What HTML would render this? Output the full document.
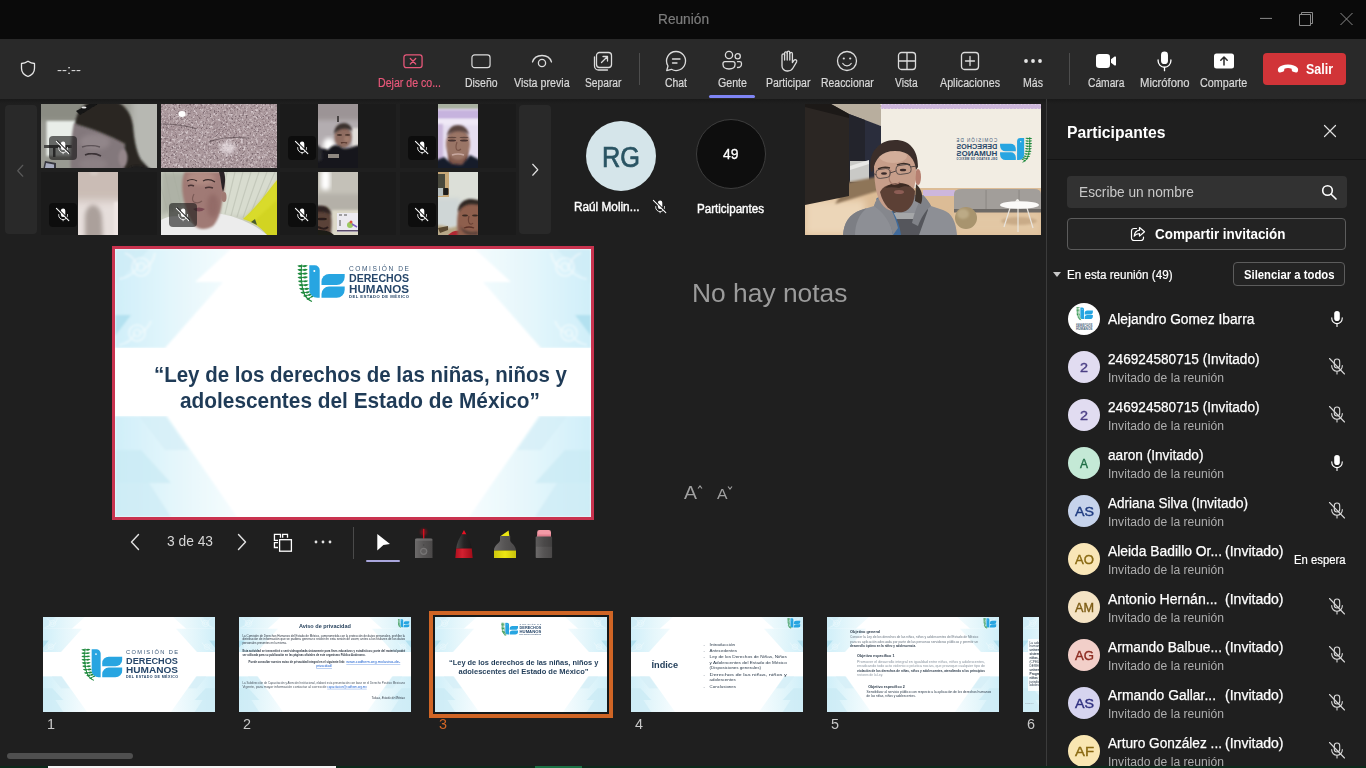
<!DOCTYPE html>
<html lang="es"><head><meta charset="utf-8"><title>Reunión</title><style>
*{box-sizing:border-box;margin:0;padding:0}
html,body{width:1366px;height:768px;overflow:hidden;background:#1f1f1f;font-family:"Liberation Sans",sans-serif;}
.a{position:absolute}
.t{position:absolute;white-space:nowrap;transform-origin:0 50%;}
svg{position:absolute;overflow:visible}
svg.clip{overflow:hidden}
</style></head><body>
<svg width="0" height="0" style="position:absolute"><defs>
<filter id="b1" x="-20%" y="-20%" width="140%" height="140%"><feGaussianBlur stdDeviation="1"/></filter>
<filter id="b2" x="-20%" y="-20%" width="140%" height="140%"><feGaussianBlur stdDeviation="2"/></filter>
<filter id="b3" x="-30%" y="-30%" width="160%" height="160%"><feGaussianBlur stdDeviation="3.500"/></filter>
<filter id="b05" x="-10%" y="-10%" width="120%" height="120%"><feGaussianBlur stdDeviation="0.500"/></filter>
<filter id="rock" x="0" y="0" width="100%" height="100%"><feTurbulence type="fractalNoise" baseFrequency="0.550" numOctaves="2" seed="7" result="n"/><feColorMatrix in="n" type="matrix" values="0 0 0 0 0.200  0 0 0 0 0.140  0 0 0 0 0.160  4 0 0 0 -2.120"/><feGaussianBlur stdDeviation="0.400"/></filter>
<filter id="rockw" x="0" y="0" width="100%" height="100%"><feTurbulence type="fractalNoise" baseFrequency="0.400" numOctaves="2" seed="21" result="n"/><feColorMatrix in="n" type="matrix" values="0 0 0 0 0.940  0 0 0 0 0.880  0 0 0 0 0.900  0 3.500 0 0 -1.750"/><feGaussianBlur stdDeviation="0.500"/></filter>
<filter id="rock2" x="0" y="0" width="100%" height="100%"><feTurbulence type="fractalNoise" baseFrequency="0.060" numOctaves="2" seed="3" result="n"/><feColorMatrix in="n" type="matrix" values="0 0 0 0 0.350  0 0 0 0 0.260  0 0 0 0 0.280  2.500 0 0 0 -1.050"/></filter>
<symbol id="micoff" viewBox="0 0 28 24"><g fill="none" stroke="#e4e4e4" stroke-linecap="round"><rect x="11.900" y="5.600" width="4.400" height="8.300" rx="2.200" fill="#fff" stroke="none"/><path d="M9.700 11.600v.6a4.400 4.400 0 0 0 8.800 0v-.6" stroke-width="1"/><path d="M14.100 16.600v1.200" stroke-width="1"/><path d="M8.200 5.200l12.200 12" stroke="#161616" stroke-width="1.600"/><path d="M7.400 5.300l12.400 12.300" stroke="#fff" stroke-width="1.100"/></g></symbol>

<linearGradient id="lg1" gradientUnits="userSpaceOnUse" x1="0" x2="118" y1="0" y2="0"><stop offset="0" stop-color="#d0eff9"/><stop offset=".5" stop-color="#e4f6fb"/><stop offset="1" stop-color="#f5fcfe"/></linearGradient>
<linearGradient id="lg2" x1="0" x2="1" y1="0" y2="0"><stop offset="0" stop-color="#bfe5f2"/><stop offset="1" stop-color="#dff2f8"/></linearGradient>
<g id="sbgq">
 <path d="M0 0H116L80 33H0z" fill="url(#lg1)"/><path d="M0 33H108L50 99H0z" fill="url(#lg1)"/>
 <path d="M0 0H34L0 36z" fill="#cdebf5" opacity=".6"/>
 <path d="M0 66H16L0 87z" fill="#b3e1f0"/>
 <g fill="none" stroke="#fff" stroke-width="1.600" opacity=".55"><circle cx="26" cy="18" r="9"/><circle cx="26" cy="18" r="4"/><path d="M4 30q14-2 20-14M40 4q-2 12-12 16M10 4q10 4 12 14"/><circle cx="22" cy="84" r="8"/><circle cx="22" cy="84" r="3.500"/><path d="M4 96q12-2 16-12M36 72q-4 10-12 12"/><circle cx="22" cy="250" r="9"/><path d="M4 262q12-2 18-12M40 238q-4 10-14 12M6 236q10 4 14 14"/><circle cx="20" cy="190" r="7"/></g>
 <path d="M0 167H52L122 268H0z" fill="url(#lg1)"/>
 <path d="M24 167H50L74 201H50z" fill="#d4eef7" opacity=".7"/>
 <path d="M0 201H26L56 234H0z" fill="#c9e9f4" opacity=".7"/>
 <path d="M0 234H34L56 268H0z" fill="#cdebf5" opacity=".7"/>
</g>
<symbol id="sbg" viewBox="0 0 476 268" preserveAspectRatio="none">
 <rect width="476" height="268" fill="#fff"/>
 <g filter="url(#b1)"><use href="#sbgq"/><use href="#sbgq" transform="translate(476,0) scale(-1,1)"/></g>
 <rect x="0" y="99" width="476" height="68" fill="#fff" opacity=".9"/>
</symbol>
<symbol id="bird" viewBox="0 0 48 38">
 <g fill="#1f8a3e"><path d="M5.200 0.500c-1 10-0.500 22 3 30c1.500 3 4 5 7 6.500l-.5.900c-3.500-1.500-6-3.800-7.600-7c-3.400-8-3.900-20-2.900-30.400z"/>
 <path d="M0.300 1.800q3 2.800 5.200 0.600q2.200 1.800 5.300-0.800q-2.600-1.300-5.300 0q-2.400-1.300-5.200.2zM0.300 5.600q3 2.800 5.200 0.600q2.200 1.800 5.300-0.800q-2.600-1.300-5.300 0q-2.400-1.300-5.200.2zM0.400 9.400q3 2.800 5.200 0.600q2.200 1.800 5.300-0.800q-2.600-1.300-5.300 0q-2.400-1.300-5.200.2zM0.500 13.200q3 2.800 5.200 0.600q2.200 1.800 5.300-0.800q-2.600-1.300-5.300 0q-2.400-1.300-5.200.2zM0.800 17q3 2.800 5.200 0.600q2.200 1.800 5.300-0.800q-2.600-1.300-5.300 0q-2.400-1.300-5.200.2zM1.300 20.800q3 2.800 5.200 0.600q2.200 1.800 5.300-0.800q-2.600-1.300-5.300 0q-2.400-1.300-5.200.2zM2 24.600q3 2.800 5.200 0.600q2.200 1.800 5.300-0.800q-2.600-1.300-5.300 0q-2.400-1.300-5.200.2zM3.400 28.400q3 2.600 5 0.400q2.400 1.600 5.200-1.200q-2.700-1-5.200.4q-2.600-1-5 .4zM6 32q3.200 2 4.800-.4q2.600 1.200 4.800-2q-2.800-.6-4.900 1.200q-2.700-.6-4.700 1.200zM9.500 35.600q3.300.8 4-1.800q2.700.4 3.800-3q-2.700.3-4.200 2.400q-2.600.3-3.600 2.400z"/></g>
 <path d="M12.300 1.300h5.400a5 5 0 0 1 5 5v27.500h-2.400a8 8 0 0 1-8-8z" fill="#27a5e1"/>
 <circle cx="17.300" cy="6.900" r="1" fill="#fff"/>
 <path d="M32 10h15.700v3a8 8 0 0 1-8 8H24.500v-3.500a7.500 7.500 0 0 1 7.500-7.500z" fill="#27a5e1"/>
 <path d="M32 22.600h15.700v3.200a8 8 0 0 1-8 8H24.500v-3.700a7.500 7.500 0 0 1 7.500-7.500z" fill="#27a5e1"/>
</symbol>
<symbol id="logo" viewBox="0 0 112 38">
 <use href="#bird" x="0" y="0" width="48" height="38"/>
 <g font-family="Liberation Sans, sans-serif" fill="#27476a">
 <text x="52" y="7" font-size="6.600" textLength="60" lengthAdjust="spacing" fill="#3a5878">COMISIÓN DE</text>
 <text x="52" y="18" font-size="11" font-weight="700" textLength="60" lengthAdjust="spacingAndGlyphs">DERECHOS</text>
 <text x="52" y="28.600" font-size="11" font-weight="700" textLength="60" lengthAdjust="spacingAndGlyphs">HUMANOS</text>
 <text x="52" y="34.300" font-size="4.200" font-weight="700" textLength="60" lengthAdjust="spacing">DEL ESTADO DE MÉXICO</text>
 </g>
</symbol>

</defs></svg>
<div class="a" style="left:0px;top:0px;width:1366px;height:39px;background:#0a0a0a"></div>
<div class="t" style="left:657.5px;top:10.0px;font-size:14px;line-height:18px;color:#7c7c7c;font-weight:400;transform:scaleX(0.9778);-webkit-text-stroke:.2px #7c7c7c;">Reunión</div>
<svg style="left:1255px;top:8px" width="100" height="24" viewBox="0 0 100 24" fill="none" stroke="#8a8a8a" stroke-width="1"><path d="M5 10.400h12"/><path d="M44.500 6.500h11v11h-11zM46.500 6.500v-2h11v11h-2"/><path d="M85.500 5l12 12M97.500 5l-12 12"/></svg>
<div class="a" style="left:0px;top:39px;width:1366px;height:60px;background:#292929"></div>
<div class="a" style="left:0px;top:99px;width:1366px;height:5px;background:linear-gradient(#191919,#1f1f1f)"></div>
<svg style="left:18px;top:59px" width="20" height="20" viewBox="0 0 20 20" fill="none" stroke="#e6e6e6" stroke-width="1.300" stroke-linejoin="round"><path d="M10 2.200c2.200 1.500 4.300 2.200 6.500 2.300v4.700c0 4-2.600 6.800-6.500 8.300c-3.900-1.500-6.500-4.300-6.500-8.300v-4.700c2.200-.1 4.300-.8 6.500-2.300z"/></svg>
<div class="t" style="left:57.0px;top:61.0px;font-size:13px;line-height:17px;color:#e0e0e0;font-weight:400;transform:scaleX(1.1463);">--:--</div>
<svg style="left:403px;top:53.500px" width="20" height="14.500" viewBox="0 0 22 16" fill="none" stroke="#e8587a" stroke-width="1.400" stroke-linecap="round"><rect x="1" y="1" width="20" height="14" rx="2.500"/><path d="M8 5l6 6M14 5l-6 6"/></svg>
<div class="t" style="left:378.0px;top:75.0px;font-size:12px;line-height:16px;color:#e8587a;font-weight:400;transform:scaleX(0.8827);-webkit-text-stroke:.2px #e8587a;">Dejar de co...</div>
<svg style="left:471px;top:53.500px" width="20" height="14.500" viewBox="0 0 22 16" fill="none" stroke="#dcdcdc" stroke-width="1.300"><rect x="1" y="1" width="20" height="14" rx="3"/></svg>
<div class="t" style="left:465.0px;top:75.0px;font-size:12px;line-height:16px;color:#d9d9d9;font-weight:400;transform:scaleX(0.8699);-webkit-text-stroke:.2px #d9d9d9;">Diseño</div>
<svg style="left:531px;top:52px" width="22" height="18" viewBox="0 0 22 18" fill="none" stroke="#dcdcdc" stroke-width="1.300" stroke-linecap="round"><path d="M1.500 10c1.200-4 4.800-6.500 9.500-6.500s8.300 2.500 9.500 6.500"/><circle cx="11" cy="11" r="3.600"/></svg>
<div class="t" style="left:514.0px;top:75.0px;font-size:12px;line-height:16px;color:#d9d9d9;font-weight:400;transform:scaleX(0.8898);-webkit-text-stroke:.2px #d9d9d9;">Vista previa</div>
<svg style="left:593px;top:51px" width="20" height="20" viewBox="0 0 20 20" fill="none" stroke="#dcdcdc" stroke-width="1.300" stroke-linecap="round" stroke-linejoin="round"><rect x="3.500" y="1.500" width="15" height="15" rx="3"/><path d="M1.500 6v9a4 4 0 0 0 4 4h9"/><path d="M8.500 11.500l6-6M10 5.500h4.500v4.500"/></svg>
<div class="t" style="left:585.0px;top:75.0px;font-size:12px;line-height:16px;color:#d9d9d9;font-weight:400;transform:scaleX(0.8524);-webkit-text-stroke:.2px #d9d9d9;">Separar</div>
<div class="a" style="left:639px;top:53px;width:1px;height:32px;background:#4d4d4d"></div>
<svg style="left:665px;top:50px" width="22" height="22" viewBox="0 0 22 22" fill="none" stroke="#dcdcdc" stroke-width="1.300" stroke-linecap="round" stroke-linejoin="round"><path d="M11 1.500a9.500 9.500 0 1 1-4.600 17.800l-4.700 1.300 1.300-4.600A9.500 9.500 0 0 1 11 1.500z"/><path d="M7.500 9h7.500M7.500 13h4.500"/></svg>
<div class="t" style="left:665.0px;top:75.0px;font-size:12px;line-height:16px;color:#d9d9d9;font-weight:400;transform:scaleX(0.8675);-webkit-text-stroke:.2px #d9d9d9;">Chat</div>
<svg style="left:721px;top:50px" width="22" height="22" viewBox="0 0 22 22" fill="none" stroke="#dcdcdc" stroke-width="1.300" stroke-linecap="round" stroke-linejoin="round"><circle cx="8" cy="5" r="3.600"/><circle cx="16.700" cy="6.300" r="2.600"/><path d="M2 13.500a1.800 1.800 0 0 1 1.800-1.800h8.400a1.800 1.800 0 0 1 1.800 1.800v1c0 2.800-2.400 4.500-6 4.500s-6-1.700-6-4.500z"/><path d="M16.500 11.700h2.200a1.800 1.800 0 0 1 1.800 1.800v.5c0 2.200-1.600 3.500-4 3.500"/></svg>
<div class="t" style="left:717.7px;top:75.0px;font-size:12px;line-height:16px;color:#d9d9d9;font-weight:400;transform:scaleX(0.8868);-webkit-text-stroke:.2px #d9d9d9;">Gente</div>
<div class="a" style="left:709px;top:95px;width:46px;height:2.5px;background:#7f85f5;border-radius:1.500px"></div>
<svg style="left:778px;top:49px" width="20" height="24" viewBox="0 0 20 24" fill="none" stroke="#dcdcdc" stroke-width="1.300" stroke-linecap="round" stroke-linejoin="round"><path d="M4 13V6.200a1.300 1.300 0 0 1 2.600 0V4.200a1.300 1.300 0 0 1 2.600 0V3.500a1.300 1.300 0 0 1 2.600 0v1.200a1.300 1.300 0 0 1 2.600 0v8.800l1.700-2.300a1.500 1.500 0 0 1 2.500 1.600l-3.600 6.200a6 6 0 0 1-5.200 3h-.8A5 5 0 0 1 4 17z"/><path d="M6.600 6v5M9.200 4.200V11M11.800 4.500V11"/></svg>
<div class="t" style="left:766.0px;top:75.0px;font-size:12px;line-height:16px;color:#d9d9d9;font-weight:400;transform:scaleX(0.8760);-webkit-text-stroke:.2px #d9d9d9;">Participar</div>
<svg style="left:836px;top:50px" width="22" height="22" viewBox="0 0 22 22" fill="none" stroke="#dcdcdc" stroke-width="1.300" stroke-linecap="round"><circle cx="11" cy="11" r="9.500"/><path d="M6.800 13.500c1 1.500 2.500 2.300 4.200 2.300s3.200-.8 4.200-2.300"/><circle cx="7.800" cy="8.500" r="1.100" fill="#dcdcdc" stroke="none"/><circle cx="14.200" cy="8.500" r="1.100" fill="#dcdcdc" stroke="none"/></svg>
<div class="t" style="left:821.0px;top:75.0px;font-size:12px;line-height:16px;color:#d9d9d9;font-weight:400;transform:scaleX(0.8698);-webkit-text-stroke:.2px #d9d9d9;">Reaccionar</div>
<svg style="left:897px;top:51px" width="20" height="20" viewBox="0 0 20 20" fill="none" stroke="#dcdcdc" stroke-width="1.300"><rect x="1.500" y="1.500" width="17" height="17" rx="3"/><path d="M10 1.500v17M1.500 10h17"/></svg>
<div class="t" style="left:895.4px;top:75.0px;font-size:12px;line-height:16px;color:#d9d9d9;font-weight:400;transform:scaleX(0.8538);-webkit-text-stroke:.2px #d9d9d9;">Vista</div>
<svg style="left:960px;top:51px" width="20" height="20" viewBox="0 0 20 20" fill="none" stroke="#dcdcdc" stroke-width="1.300" stroke-linecap="round"><rect x="1.500" y="1.500" width="17" height="17" rx="3"/><path d="M10 5.500v9M5.500 10h9"/></svg>
<div class="t" style="left:940.0px;top:75.0px;font-size:12px;line-height:16px;color:#d9d9d9;font-weight:400;transform:scaleX(0.8905);-webkit-text-stroke:.2px #d9d9d9;">Aplicaciones</div>
<svg style="left:1023px;top:57px" width="20" height="8" viewBox="0 0 20 8" fill="#e6e6e6"><circle cx="3" cy="4" r="1.900"/><circle cx="10" cy="4" r="1.900"/><circle cx="17" cy="4" r="1.900"/></svg>
<div class="t" style="left:1023.0px;top:75.0px;font-size:12px;line-height:16px;color:#d9d9d9;font-weight:400;transform:scaleX(0.8822);-webkit-text-stroke:.2px #d9d9d9;">Más</div>
<div class="a" style="left:1069px;top:53px;width:1px;height:32px;background:#4d4d4d"></div>
<svg style="left:1095px;top:52px" width="22" height="18" viewBox="0 0 22 18" fill="#ffffff"><rect x="1" y="2" width="14" height="14" rx="3.200"/><path d="M16 7.200l3.600-2.600a.9.900 0 0 1 1.400.7v7.400a.9.900 0 0 1-1.400.7L16 10.800z"/></svg>
<div class="t" style="left:1087.5px;top:75.0px;font-size:12px;line-height:16px;color:#d9d9d9;font-weight:400;transform:scaleX(0.8551);-webkit-text-stroke:.2px #d9d9d9;">Cámara</div>
<svg style="left:1155.500px;top:50px" width="17" height="22.600" viewBox="0 0 18 24" fill="#ffffff"><rect x="5.300" y="1.500" width="7.400" height="13.500" rx="3.700"/><path d="M2.200 10.500v1a6.800 6.800 0 0 0 13.600 0v-1" fill="none" stroke="#fff" stroke-width="1.400" stroke-linecap="round"/><path d="M9 18.500v3.500" stroke="#fff" stroke-width="1.400" stroke-linecap="round"/></svg>
<div class="t" style="left:1139.5px;top:75.0px;font-size:12px;line-height:16px;color:#d9d9d9;font-weight:400;transform:scaleX(0.9395);-webkit-text-stroke:.2px #d9d9d9;">Micrófono</div>
<svg style="left:1213px;top:52px" width="22" height="18" viewBox="0 0 22 18"><rect x="1" y="1.500" width="20" height="15" rx="2.500" fill="#fff"/><path d="M11 13V5.500M7.800 8.300L11 5l3.200 3.300" fill="none" stroke="#292929" stroke-width="1.500" stroke-linecap="round" stroke-linejoin="round"/></svg>
<div class="t" style="left:1199.8px;top:75.0px;font-size:12px;line-height:16px;color:#d9d9d9;font-weight:400;transform:scaleX(0.8958);-webkit-text-stroke:.2px #d9d9d9;">Comparte</div>
<div class="a" style="left:1263px;top:53px;width:83px;height:32px;background:#d13438;border-radius:4px"></div>
<svg style="left:1277px;top:63px" width="22" height="12" viewBox="0 0 22 12" fill="#fff"><path d="M11 1.500c-4.300 0-8 1.300-9.600 3.600c-.7 1-.6 2.300-.2 3.400c.3.800 1.100 1.200 1.900 1l2.800-.7c.7-.2 1.200-.8 1.300-1.500l.2-1.600c1.100-.5 2.300-.7 3.600-.7s2.500.2 3.600.7l.2 1.600c.1.700.6 1.300 1.300 1.500l2.800.7c.8.200 1.600-.2 1.900-1c.4-1.100.5-2.400-.2-3.400C19 2.800 15.300 1.500 11 1.500z"/></svg>
<div class="t" style="left:1305.5px;top:60.0px;font-size:14px;line-height:18px;color:#fff;font-weight:700;transform:scaleX(0.8893);">Salir</div>
<div class="a" style="left:5px;top:105px;width:32px;height:129px;background:#292929;border-radius:4px"></div>
<svg style="left:16px;top:163.500px" width="8.500" height="13.500" viewBox="0 0 10 16" fill="none" stroke="#5a5a5a" stroke-width="1.400" stroke-linecap="round" stroke-linejoin="round"><path d="M8 1.500l-6 6.500 6 6.500"/></svg>
<div class="a" style="left:519px;top:105px;width:32px;height:129px;background:#292929;border-radius:4px"></div>
<svg style="left:530.500px;top:163.300px" width="8.500" height="13.500" viewBox="0 0 10 16" fill="none" stroke="#e0e0e0" stroke-width="1.400" stroke-linecap="round" stroke-linejoin="round"><path d="M2 1.500l6 6.500-6 6.500"/></svg>
<div class="a" style="left:41px;top:104px;width:115.6px;height:64px;background:#1b1b1b;overflow:hidden"><svg style="left:0;top:0" width="116" height="64" viewBox="0 0 116 64"><rect width="116" height="64" fill="#999a92"/><rect x="-10" y="-10" width="52" height="26" fill="#8b8c83" filter="url(#b2)"/><rect x="90" y="-10" width="40" height="90" fill="#b7b8b2" filter="url(#b3)"/><rect x="5.500" y="17" width="31" height="35" fill="#e9eee9" filter="url(#b1)"/><rect x="3" y="41" width="28" height="3" fill="#4a4a46" filter="url(#b05)"/><rect x="12" y="43" width="2.500" height="10" fill="#4a4a46" filter="url(#b05)"/><path d="M2 66l2-9 11 2v7z" fill="#34353e" filter="url(#b05)"/><path d="M4 64l1-5 8 1.500v3.500z" fill="#a8acc0" filter="url(#b05)"/><path d="M33 19C50 23 70 31 85 40L88 72H30C29 50 30 32 33 19z" fill="#83787c" filter="url(#b1)"/><ellipse cx="54" cy="38" rx="15" ry="8" fill="#988c90" opacity=".7" filter="url(#b2)"/><ellipse cx="52" cy="60" rx="14" ry="6" fill="#908488" opacity=".7" filter="url(#b2)"/><path d="M34 20C36 4 46-5 62-5C80-5 90 6 92 22C93 34 95 46 99 54C101 58 106 61 110 68L83 68L84 40C70 32 50 24 34 20z" fill="#2a2523" filter="url(#b1)"/><ellipse cx="82" cy="54" rx="4.500" ry="9" fill="#94868a" filter="url(#b1)"/><path d="M44 51q8-3 16 1" stroke="#3a3236" stroke-width="1.800" fill="none" filter="url(#b05)"/><path d="M41 43q9-3 18 0" stroke="#4a4044" stroke-width="1.400" fill="none" opacity=".7" filter="url(#b05)"/><path d="M35 7l14-7h8l-18 11z" fill="#141414" filter="url(#b05)"/><ellipse cx="43" cy="3.500" rx="2.500" ry="1" fill="#e8e8e8" filter="url(#b05)"/><path d="M86 68c2-8 12-8 26-2v4z" fill="#1e1c1d" filter="url(#b1)"/></svg><div class="a" style="left:8px;top:32px;width:28px;height:24px;border-radius:4px;background:rgba(20,20,20,.62)"></div><svg style="left:8px;top:32px" width="28" height="24"><use href="#micoff"/></svg></div>
<div class="a" style="left:161px;top:104px;width:115.6px;height:64px;background:#1b1b1b;overflow:hidden"><svg style="left:0;top:0" width="116" height="64" viewBox="0 0 116 64"><rect width="116" height="64" fill="#ae9ca0"/><rect width="116" height="64" filter="url(#rock2)" opacity=".55"/><rect width="116" height="64" filter="url(#rockw)" opacity=".55"/><rect width="116" height="64" filter="url(#rock)"/><ellipse cx="21" cy="10" rx="3.500" ry="3" fill="#fff" filter="url(#b05)"/><ellipse cx="67" cy="44" rx="8" ry="6" fill="#efe6ea" opacity=".7" filter="url(#b2)"/><path d="M0 20q20 0 36 5M48 38q14-6 40-4" stroke="#4a3c40" stroke-width="1.200" fill="none" opacity=".55" filter="url(#b05)"/></svg></div>
<div class="a" style="left:280px;top:104px;width:115.6px;height:64px;background:#1b1b1b;overflow:hidden"><svg class="clip" style="left:38px;top:0" width="40" height="64" viewBox="0 0 40 64"><g><rect width="40" height="64" fill="#b3adb0"/><rect x="-8" y="-8" width="56" height="24" fill="#9c9496" filter="url(#b2)"/><ellipse cx="11" cy="41" rx="6" ry="7" fill="#fff" filter="url(#b2)"/><rect x="34" y="24" width="12" height="18" fill="#e0dcd8" filter="url(#b1)"/><ellipse cx="25" cy="33" rx="8.500" ry="11" fill="#8e6c60" filter="url(#b1)"/><path d="M16 30c0-8 6-11 10-11s8 3 8 8c-4-3-12-4-18 3z" fill="#3a302e" filter="url(#b1)"/><g filter="url(#b05)" fill="#4a342c"><ellipse cx="21.500" cy="31" rx="2.600" ry=".9"/><ellipse cx="29.500" cy="31" rx="2.600" ry=".9"/></g><path d="M23 39q3-1.500 6 0" stroke="#5a3a30" stroke-width="1.600" fill="none" filter="url(#b05)"/><ellipse cx="29" cy="35" rx="3" ry="3" fill="#b08a78" opacity=".6" filter="url(#b1)"/><path d="M-6 72V50c4-6 12-6 16-4c4-6 10-6 14-2c6 2 12-2 22-4v32z" fill="#16171d" filter="url(#b1)"/><path d="M-6 40c10 0 11 8 10 16l-10 4z" fill="#2a2a2e" filter="url(#b1)"/><rect x="10" y="50" width="11" height="4" fill="#8e8880" filter="url(#b05)"/><path d="M19 12h2v6h-2z" fill="#4a4444" filter="url(#b05)"/></g></svg><div class="a" style="left:8px;top:32px;width:28px;height:24px;border-radius:4px;background:#0d0d0d"></div><svg style="left:8px;top:32px" width="28" height="24"><use href="#micoff"/></svg></div>
<div class="a" style="left:400px;top:104px;width:115.6px;height:64px;background:#1b1b1b;overflow:hidden"><svg class="clip" style="left:38px;top:0" width="40" height="64" viewBox="0 0 40 64"><g><rect width="40" height="64" fill="#e6def0"/><rect x="-6" y="-6" width="52" height="11" fill="#a8b0a0" filter="url(#b1)"/><rect x="-6" y="6" width="52" height="9" fill="#c6b3de" filter="url(#b1)"/><rect x="-6" y="15" width="52" height="6" fill="#efe8f6" filter="url(#b1)"/><rect x="-6" y="20" width="11" height="40" fill="#cbb8dc" filter="url(#b1)"/><rect x="10" y="46" width="20" height="18" fill="#80594c" filter="url(#b1)"/><ellipse cx="20" cy="40" rx="12" ry="16" fill="#9a7466" filter="url(#b1)"/><path d="M9 32c1-8 6-11 11-11s10 3 11 10c-6-5-16-5-22 1z" fill="#5a4440" filter="url(#b1)"/><g filter="url(#b05)" fill="#4a3430"><ellipse cx="14" cy="36.500" rx="4" ry="1"/><ellipse cx="26" cy="36.500" rx="4" ry="1"/><ellipse cx="14" cy="33.500" rx="4.500" ry=".7" opacity=".7"/><ellipse cx="26" cy="33.500" rx="4.500" ry=".7" opacity=".7"/></g><path d="M19 38q-2 6 0 8q2 1 4-1" stroke="#7a5448" stroke-width="1.200" fill="none" filter="url(#b05)"/><path d="M14 51q6-2 12 0" stroke="#c8a8a0" stroke-width="1.500" fill="none" filter="url(#b05)"/><path d="M-6 72v-14l12-5 8 7 10 1 8-10 14 7v14z" fill="#161a2c" filter="url(#b1)"/></g></svg><div class="a" style="left:8px;top:32px;width:28px;height:24px;border-radius:4px;background:#0d0d0d"></div><svg style="left:8px;top:32px" width="28" height="24"><use href="#micoff"/></svg></div>
<div class="a" style="left:41px;top:172px;width:115.6px;height:63px;background:#1b1b1b;overflow:hidden"><svg class="clip" style="left:37px;top:0" width="40" height="63" viewBox="0 0 40 63"><g><rect width="40" height="63" fill="#d0c4be"/><rect x="-10" y="30" width="60" height="50" fill="#e6dedb" filter="url(#b3)"/><ellipse cx="16" cy="1" rx="4" ry="2.500" fill="#fff" filter="url(#b1)"/><rect x="-10" y="-10" width="60" height="34" fill="#c9bbb3" filter="url(#b2)" opacity=".8"/><path d="M7 70V46c0-8 4-13 8-13s9 5 9 14l1 23z" fill="#aba09b" filter="url(#b2)"/><rect x="36" y="30" width="8" height="40" fill="#efe6e4" filter="url(#b1)"/></g></svg><div class="a" style="left:8px;top:31px;width:28px;height:24px;border-radius:4px;background:#0d0d0d"></div><svg style="left:8px;top:31px" width="28" height="24"><use href="#micoff"/></svg></div>
<div class="a" style="left:161px;top:172px;width:115.6px;height:63px;background:#1b1b1b;overflow:hidden"><svg style="left:0;top:0" width="116" height="63" viewBox="0 0 116 63"><rect width="116" height="63" fill="#c9ccc0"/><path d="M0 0h26v30L0 44z" fill="#aeb2a6" filter="url(#b2)"/><path d="M62 0h54v10L84 44H58z" fill="#d8dccf" filter="url(#b2)"/><g stroke="#a8ad9f" stroke-width="1.200" opacity=".4" filter="url(#b05)"><path d="M66 0L58 40M74 0L64 42M82 0L70 44M90 0L76 45M98 0L82 46M106 0L88 46M114 0L96 40M4 0L12 40M12 0L20 34M-2 8L8 44"/></g><path d="M116 8v55h-10c-6-8-16-14-24-16c10-8 24-26 34-39z" fill="#d2d422"/><path d="M116 8v20L92 50l-10-3c10-8 24-26 34-39z" fill="#e0e236" opacity=".5" filter="url(#b1)"/><path d="M0 63V48c6-4 16-5 22-2l14 8c8 0 14-6 18-13c18 2 38 10 52 22z" fill="#ececec" filter="url(#b05)"/><path d="M22 24c-2-12 0-22 2-24h36c4 6 4 20 2 26c-2 10-4 22-10 28c-6 4-14 4-18 0c-6-8-10-18-12-30z" fill="#a07a74" filter="url(#b1)"/><ellipse cx="40" cy="6" rx="14" ry="7" fill="#ba948a" opacity=".7" filter="url(#b2)"/><ellipse cx="52" cy="34" rx="6" ry="12" fill="#8a625e" opacity=".6" filter="url(#b2)"/><path d="M58 0h5c2 6 1 14-1 20c-2-6-2-14-4-20z" fill="#2a2426" filter="url(#b05)"/><ellipse cx="63" cy="25" rx="2.500" ry="5" fill="#a07a72" filter="url(#b05)"/><path d="M26 9q5-3 10 0M42 9q6-3 12 1" stroke="#3a2a2a" stroke-width="1.200" fill="none" filter="url(#b05)"/><path d="M27 14q3-1.500 6 0M44 16q4-1.500 8 0" stroke="#4a3434" stroke-width="1.400" fill="none" filter="url(#b05)"/><path d="M32 37q6-3 12 0q-6 5-12 0z" fill="#7a4a52" filter="url(#b05)"/><path d="M33 22q-3 6 0 8q4 2 8-1" stroke="#7a5a56" stroke-width="1.200" fill="none" filter="url(#b05)"/><path d="M90 50l4-3 2 6z" fill="#4a5a30" filter="url(#b05)"/></svg><div class="a" style="left:8px;top:31px;width:28px;height:24px;border-radius:4px;background:rgba(20,20,20,.60)"></div><svg style="left:8px;top:31px" width="28" height="24"><use href="#micoff"/></svg></div>
<div class="a" style="left:280px;top:172px;width:115.6px;height:63px;background:#1b1b1b;overflow:hidden"><svg class="clip" style="left:38px;top:0" width="40" height="63" viewBox="0 0 40 63"><g><rect width="40" height="63" fill="#c4c1b8"/><rect x="-8" y="22" width="56" height="18" fill="#b4b0a8" filter="url(#b2)"/><rect x="3" y="-2" width="9" height="20" rx="4" fill="#fff" filter="url(#b2)"/><rect x="14" y="38" width="32" height="32" fill="#dcd8c8" filter="url(#b1)"/><rect x="19" y="41" width="21" height="19" fill="#eceaf0" filter="url(#b05)"/><rect x="19" y="58" width="21" height="1.500" fill="#5a4a6a" filter="url(#b05)"/><circle cx="32" cy="53" r="3" fill="#9ac860" filter="url(#b05)"/><circle cx="33" cy="50" r="1.500" fill="#e05040" filter="url(#b05)"/><path d="M34 52l5 3" stroke="#8060c0" stroke-width="1.500" filter="url(#b05)"/><path d="M21 43h3M26 43h3M22 48v6" stroke="#555" stroke-width="1" filter="url(#b05)"/><path d="M-6 36c12-3 18 0 19 8c1 8 0 14-1 26H-6z" fill="#5a4238" filter="url(#b1)"/><path d="M-6 35c12-3 18 0 19 8c-4-3-8-4-19-3z" fill="#2e2420" filter="url(#b1)"/><g filter="url(#b05)"><ellipse cx="4" cy="47" rx="5" ry="1.300" fill="#2a1e1a"/><path d="M0 55c4 2 8 2 10 0" stroke="#2a1e1a" stroke-width="2" fill="none"/></g><path d="M0 63v-5c6 0 12 1 16 5z" fill="#1c1a18" filter="url(#b05)"/></g></svg><div class="a" style="left:8px;top:31px;width:28px;height:24px;border-radius:4px;background:#0d0d0d"></div><svg style="left:8px;top:31px" width="28" height="24"><use href="#micoff"/></svg></div>
<div class="a" style="left:400px;top:172px;width:115.6px;height:63px;background:#1b1b1b;overflow:hidden"><svg class="clip" style="left:38px;top:0" width="40" height="63" viewBox="0 0 40 63"><g><rect width="40" height="63" fill="#dcdfd8"/><rect x="-8" y="26" width="30" height="30" fill="#cfd6d6" filter="url(#b2)"/><rect x="0" y="0" width="11" height="25" fill="#c8a878" filter="url(#b05)"/><rect x="0" y="2" width="7" height="21" fill="#4a4a3c" filter="url(#b05)"/><rect x="0" y="16" width="5" height="8" fill="#b8c0c0" filter="url(#b05)"/><rect x="5.500" y="16" width="5" height="7" rx="1" fill="#1e1c1c" filter="url(#b05)"/><path d="M-6 70v-16c10-2 14 0 18 2l8-2v16z" fill="#b8a888" filter="url(#b1)"/><path d="M0 56l10-2v4l-8 3z" fill="#5a4a30" filter="url(#b05)"/><path d="M10 63c4-4 8-5 12-4v4z" fill="#b02830" filter="url(#b05)"/><path d="M20 70c-1-10-2-29 2-35c4-6 12-7 24-4v39z" fill="#8e5e4e" filter="url(#b1)"/><path d="M20 40c0-8 6-13 12-13c4 0 6 1 14 2v5c-12-3-20-2-24 4z" fill="#2e2622" filter="url(#b1)"/><g filter="url(#b05)" fill="#3a2a24"><ellipse cx="27" cy="43.500" rx="3" ry="1"/><ellipse cx="37" cy="43.500" rx="3" ry="1"/></g><path d="M31 44q-1.500 6 1 8q2 .5 3-1" stroke="#6a4034" stroke-width="1.200" fill="none" filter="url(#b05)"/><path d="M26 56q5-2 10 0" stroke="#5a3028" stroke-width="1.300" fill="none" filter="url(#b05)"/><path d="M22 54c2 6 6 9 10 9h8v-4c-6 2-14 0-18-5z" fill="#5a4038" filter="url(#b1)"/></g></svg><div class="a" style="left:8px;top:31px;width:28px;height:24px;border-radius:4px;background:#0d0d0d"></div><svg style="left:8px;top:31px" width="28" height="24"><use href="#micoff"/></svg></div>
<div class="a" style="left:586px;top:121px;width:70px;height:70px;background:#d5e5ea;border-radius:50%"></div>
<div class="t" style="left:602.0px;top:137.5px;font-size:29px;line-height:38px;color:#2a5463;font-weight:400;transform:scaleX(0.8736);-webkit-text-stroke:.7px #2a5463;">RG</div>
<div class="t" style="left:573.8px;top:198.5px;font-size:12px;line-height:16px;color:#fff;font-weight:400;transform:scaleX(0.9820);-webkit-text-stroke:.4px #fff;">Raúl Molin...</div>
<svg style="left:646px;top:194.700px" width="28" height="24"><use href="#micoff"/></svg>
<div class="a" style="left:696px;top:119px;width:70px;height:70px;background:#0e0e0e;border:1px solid #3d3d3d;border-radius:50%"></div>
<div class="t" style="left:723.0px;top:144.5px;font-size:14px;line-height:18px;color:#fff;font-weight:400;transform:scaleX(0.9950);-webkit-text-stroke:.3px #fff;">49</div>
<div class="t" style="left:697.0px;top:200.5px;font-size:12px;line-height:16px;color:#fff;font-weight:400;transform:scaleX(0.9658);-webkit-text-stroke:.4px #fff;">Participantes</div>
<div class="a" style="left:112px;top:246px;width:482px;height:274px;background:#c9334f"></div>
<svg style="left:115px;top:249px" width="476" height="268"><use href="#sbg" width="476" height="268"/></svg>
<svg style="left:297px;top:264px" width="112" height="38"><use href="#logo" width="112" height="38"/></svg>
<div class="t" style="left:154.0px;top:360.0px;font-size:22px;line-height:29px;color:#1f3b57;font-weight:700;transform:scaleX(0.9305);">“Ley de los derechos de las niñas, niños y</div>
<div class="t" style="left:180.0px;top:386.0px;font-size:22px;line-height:29px;color:#1f3b57;font-weight:700;transform:scaleX(0.9467);">adolescentes del Estado de México”</div>
<div class="t" style="left:692.0px;top:275.5px;font-size:26px;line-height:34px;color:#9b9b9b;font-weight:400;transform:scaleX(1.0149);">No hay notas</div>
<div class="t" style="left:684.0px;top:480.0px;font-size:19px;line-height:25px;color:#a0a0a0;font-weight:400;transform:scaleX(1.0246);">A</div>
<div class="t" style="left:716.5px;top:483.5px;font-size:15px;line-height:20px;color:#a0a0a0;font-weight:400;transform:scaleX(1.0484);">A</div>
<svg style="left:697px;top:484px" width="40" height="8" viewBox="0 0 40 8" fill="none" stroke="#a0a0a0" stroke-width="1.100"><path d="M1 4.500l2-2.500 2 2.500"/><path d="M31 2.500l2 2.500 2-2.500"/></svg>
<svg style="left:129px;top:533px" width="12" height="18" viewBox="0 0 12 18" fill="none" stroke="#e2e2e2" stroke-width="1.400" stroke-linecap="round" stroke-linejoin="round"><path d="M9.500 1.500L2.500 9l7 7.500"/></svg>
<div class="t" style="left:166.6px;top:532.0px;font-size:14px;line-height:18px;color:#d6d6d6;font-weight:400;transform:scaleX(0.9846);">3 de 43</div>
<svg style="left:236px;top:533px" width="12" height="18" viewBox="0 0 12 18" fill="none" stroke="#e2e2e2" stroke-width="1.400" stroke-linecap="round" stroke-linejoin="round"><path d="M2.500 1.500L9.500 9l-7 7.500"/></svg>
<svg style="left:268px;top:528px" width="30" height="30" viewBox="0 0 30 30" fill="none" stroke="#fff" stroke-width="1.300"><rect x="11.600" y="11.700" width="11.800" height="11.500"/><path d="M12.500 9.800V6.450H6.450V12.300H10M14.650 9.800V6.450H19.500V9.800M10 14.650H6.450V19.500H10"/></svg>
<svg style="left:313px;top:539px" width="20" height="6" viewBox="0 0 20 6" fill="#e2e2e2"><circle cx="3" cy="3" r="1.400"/><circle cx="10" cy="3" r="1.400"/><circle cx="17" cy="3" r="1.400"/></svg>
<div class="a" style="left:353px;top:527px;width:1px;height:32px;background:#4a4a4a"></div>
<svg style="left:375px;top:533px" width="16" height="20" viewBox="0 0 16 20" fill="#fff"><path d="M2.300 1l12.700 10-6.600 1.100L2.300 17.500z"/></svg>
<div class="a" style="left:366px;top:560px;width:34px;height:2px;background:#a9a6dc;border-radius:1px"></div>
<svg style="left:410px;top:526px" width="28" height="34" viewBox="0 0 28 34"><defs><linearGradient id="gb" x1="0" x2="1"><stop offset="0" stop-color="#6c6a6a"/><stop offset=".5" stop-color="#565454"/><stop offset="1" stop-color="#4a4848"/></linearGradient><linearGradient id="gk" x1="0" x2="1"><stop offset="0" stop-color="#4a4a4a"/><stop offset=".5" stop-color="#242424"/><stop offset="1" stop-color="#1a1a1a"/></linearGradient><linearGradient id="gr" x1="0" x2="1"><stop offset="0" stop-color="#b0101e"/><stop offset=".4" stop-color="#d42030"/><stop offset="1" stop-color="#a00c18"/></linearGradient><linearGradient id="gy" x1="0" x2="1"><stop offset="0" stop-color="#cfc80e"/><stop offset=".5" stop-color="#ece612"/><stop offset="1" stop-color="#c8c20c"/></linearGradient></defs><circle cx="13.700" cy="6" r="3.500" fill="#e01020" opacity=".35" filter="url(#b1)"/><path d="M13.700 3.500v9" stroke="#e01020" stroke-width="1.300" stroke-linecap="round"/><path d="M5 14.500a2 2 0 0 1 2-2h13.500a2 2 0 0 1 2 2V32H5z" fill="url(#gb)"/><rect x="5" y="12.500" width="17.500" height="2.200" rx="1" fill="#7a7878" opacity=".6"/><circle cx="13.700" cy="25.300" r="3.600" fill="#777575"/><circle cx="13.700" cy="25.300" r="2.400" fill="#5e5c5c"/><circle cx="13.700" cy="19" r=".7" fill="#444"/></svg>
<svg style="left:450px;top:526px" width="28" height="34" viewBox="0 0 28 34"><path d="M14 4l2.400 4.600h-4.800z" fill="#e81123"/><path d="M11.600 8.600h4.800c2.600 4 4.800 9 5.400 13.800H6.200c.6-4.800 2.800-9.800 5.400-13.800z" fill="url(#gk)"/><path d="M6.200 22.400h15.600l.9 9.600H5.300z" fill="url(#gr)"/></svg>
<svg style="left:490px;top:526px" width="30" height="34" viewBox="0 0 30 34"><path d="M10.600 10l8-5.600.8 5.800z" fill="#ece612"/><path d="M10 10h10.200v4.500c0 2 5.700 5 5.700 9.500v.6H4v-.6c0-4.500 6-7.500 6-9.500z" fill="url(#gb)"/><path d="M4 24.500h22V32H4z" fill="url(#gy)"/></svg>
<svg style="left:530px;top:526px" width="28" height="34" viewBox="0 0 28 34"><path d="M7.200 6.200a2.200 2.200 0 0 1 2.200-2.200h9.400a2.200 2.200 0 0 1 2.200 2.200V11H7.200z" fill="#f29aa6"/><rect x="7.200" y="8.500" width="13.800" height="2.500" fill="#e07f8e"/><rect x="5.700" y="10.600" width="16.400" height="21.400" rx=".8" fill="url(#gb)"/><rect x="5.700" y="10.600" width="16.400" height="10.200" fill="#000" opacity=".12"/></svg>
<div class="a" style="left:43px;top:617px;width:172px;height:95px;overflow:hidden;background:#fff"><svg style="left:0;top:0" width="172" height="95" viewBox="0 0 172 95"><use href="#sbg" width="172" height="95"/><use href="#logo" x="38" y="31" width="97" height="33"/></svg></div>
<div class="a" style="left:239px;top:617px;width:172px;height:95px;overflow:hidden;background:#fff"><svg style="left:0;top:0" width="172" height="95" viewBox="0 0 172 95"><use href="#sbg" width="172" height="95"/><g font-family="Liberation Sans, sans-serif"><use href="#bird" x="158.500" y="1.800" width="12.100" height="9.600"/><text x="59.9" y="10.8" font-size="5.2" font-weight="700" fill="#1f3b57" textLength="52" lengthAdjust="spacingAndGlyphs">Aviso de privacidad</text><text x="3.4" y="19.6" font-size="2.9" font-weight="400" fill="#2b3440" textLength="162.6" lengthAdjust="spacingAndGlyphs">La Comisión de Derechos Humanos del Estado de México, comprometida con la protección de datos personales, prohíbe la</text><text x="3.4" y="23.4" font-size="2.9" font-weight="400" fill="#2b3440" textLength="162.6" lengthAdjust="spacingAndGlyphs">distribución de información que se pudiera generar o recibir en esta sesión de zoom; antes a los titulares de los datos</text><text x="3.4" y="27.3" font-size="2.9" font-weight="400" fill="#2b3440" textLength="44.4" lengthAdjust="spacingAndGlyphs">personales presentes en la misma.</text><text x="3.4" y="34.8" font-size="2.9" font-weight="700" fill="#2b3440" textLength="162.6" lengthAdjust="spacingAndGlyphs">Esta actividad se transmitirá o será videograbada únicamente para fines educativos y estadísticos; parte del material podrá</text><text x="3.4" y="38.7" font-size="2.9" font-weight="700" fill="#2b3440" textLength="123" lengthAdjust="spacingAndGlyphs">ser utilizada para su publicación en las páginas oficiales de este organismo Público Autónomo.</text><text x="9.6" y="46.4" font-size="2.9" font-weight="700" fill="#2b3440" textLength="96.5" lengthAdjust="spacingAndGlyphs">Puede consultar nuestro aviso de privacidad integral en el siguiente link:</text><text x="107.3" y="46.4" font-size="2.9" font-weight="400" fill="#1a5fd0" textLength="54" lengthAdjust="spacingAndGlyphs" text-decoration="underline">www.codhem.org.mx/aviso-de-</text><text x="77.2" y="50.4" font-size="2.9" font-weight="400" fill="#1a5fd0" textLength="15.8" lengthAdjust="spacingAndGlyphs" text-decoration="underline">privacidad/</text><text x="3.4" y="67" font-size="2.8" font-weight="400" fill="#4a5560" textLength="162.6" lengthAdjust="spacingAndGlyphs">La Subdirección de Capacitación y Atención Institucional, elaboró esta presentación con base en el Derecho Positivo Mexicano</text><text x="3.4" y="70.9" font-size="2.8" font-weight="400" fill="#4a5560" textLength="84" lengthAdjust="spacingAndGlyphs">Vigente, para mayor información contactar al correo de</text><text x="88.2" y="70.9" font-size="2.8" font-weight="400" fill="#1a5fd0" textLength="39.6" lengthAdjust="spacingAndGlyphs" text-decoration="underline">capacitacion@codhem.org.mx</text><text x="132.6" y="82.4" font-size="2.9" font-weight="400" fill="#2b3440" textLength="33.2" lengthAdjust="spacingAndGlyphs" font-style="italic">Toluca, Estado de México</text></g></svg></div>
<div class="a" style="left:429px;top:611px;width:184px;height:107px;background:#d06525"></div><div class="a" style="left:433px;top:615px;width:176px;height:99px;background:#15191b"></div><div class="a" style="left:435px;top:617px;width:172px;height:95px;overflow:hidden;background:#fff"><svg style="left:0;top:0" width="172" height="95" viewBox="0 0 172 95"><use href="#sbg" width="172" height="95"/><g font-family="Liberation Sans, sans-serif"><use href="#logo" x="65.800" y="5.300" width="40.500" height="13.700"/><text x="14.1" y="48" font-size="7.4" font-weight="700" fill="#1f3b57" textLength="149.2" lengthAdjust="spacingAndGlyphs">“Ley de los derechos de las niñas, niños y</text><text x="23.5" y="57.3" font-size="7.4" font-weight="700" fill="#1f3b57" textLength="130" lengthAdjust="spacingAndGlyphs">adolescentes del Estado de México”</text></g></svg></div>
<div class="a" style="left:631px;top:617px;width:172px;height:95px;overflow:hidden;background:#fff"><svg style="left:0;top:0" width="172" height="95" viewBox="0 0 172 95"><use href="#sbg" width="172" height="95"/><g font-family="Liberation Sans, sans-serif"><use href="#bird" x="156" y="1" width="13.500" height="10.700"/><text x="20.5" y="51.4" font-size="8.6" font-weight="700" fill="#1f3b57" textLength="26.6" lengthAdjust="spacingAndGlyphs">Índice</text><text x="78.6" y="28.8" font-size="4" font-weight="400" fill="#2b3a4a" textLength="25.5" lengthAdjust="spacingAndGlyphs">Introducción</text><text x="78.6" y="34.7" font-size="4" font-weight="400" fill="#2b3a4a" textLength="27.4" lengthAdjust="spacingAndGlyphs">Antecedentes</text><text x="78.6" y="40.5" font-size="4" font-weight="400" fill="#2b3a4a" textLength="77.2" lengthAdjust="spacingAndGlyphs">Ley de los Derechos de Niñas, Niños</text><text x="78.6" y="46.6" font-size="4" font-weight="400" fill="#2b3a4a" textLength="77.2" lengthAdjust="spacingAndGlyphs">y Adolescentes del Estado de México</text><text x="78.6" y="52.4" font-size="4" font-weight="400" fill="#2b3a4a" textLength="51.3" lengthAdjust="spacingAndGlyphs">(Disposiciones generales)</text><text x="78.6" y="58.6" font-size="4" font-weight="400" fill="#2b3a4a" textLength="77.2" lengthAdjust="spacingAndGlyphs">Derechos de las niñas, niños y</text><text x="78.6" y="64.3" font-size="4" font-weight="400" fill="#2b3a4a" textLength="26" lengthAdjust="spacingAndGlyphs">adolescentes</text><text x="78.6" y="70.5" font-size="4" font-weight="400" fill="#2b3a4a" textLength="26.3" lengthAdjust="spacingAndGlyphs">Conclusiones</text><text x="72.4" y="28.8" font-size="4" font-weight="400" fill="#8a95a0">-</text><text x="72.4" y="34.7" font-size="4" font-weight="400" fill="#8a95a0">-</text><text x="72.4" y="40.5" font-size="4" font-weight="400" fill="#8a95a0">-</text><text x="72.4" y="58.6" font-size="4" font-weight="400" fill="#8a95a0">-</text><text x="72.4" y="70.5" font-size="4" font-weight="400" fill="#8a95a0">-</text></g></svg></div>
<div class="a" style="left:827px;top:617px;width:172px;height:95px;overflow:hidden;background:#fff"><svg style="left:0;top:0" width="172" height="95" viewBox="0 0 172 95"><use href="#sbg" width="172" height="95"/><g font-family="Liberation Sans, sans-serif"><use href="#bird" x="156" y="1" width="13.500" height="10.700"/><text x="23.1" y="15.7" font-size="3.6" font-weight="700" fill="#2b3a4a" textLength="30.1" lengthAdjust="spacingAndGlyphs">Objetivo general</text><text x="23.1" y="21" font-size="3.1" font-weight="400" fill="#6a7682" textLength="128.1" lengthAdjust="spacingAndGlyphs">Conocer la Ley de los derechos de las niñas, niños y adolescentes del Estado de México</text><text x="23.1" y="25.5" font-size="3.1" font-weight="400" fill="#6a7682" textLength="128.1" lengthAdjust="spacingAndGlyphs">para su aplicación adecuada por parte de las personas servidoras públicas y permitir un</text><text x="23.1" y="29.9" font-size="3.1" font-weight="700" fill="#2b3a4a" textLength="65.9" lengthAdjust="spacingAndGlyphs">desarrollo óptimo en la niñez y adolescencia.</text><text x="30.1" y="40.4" font-size="3.6" font-weight="700" fill="#2b3a4a" textLength="37.4" lengthAdjust="spacingAndGlyphs">Objetivo específico 1</text><text x="30.1" y="46" font-size="3.1" font-weight="400" fill="#8a95a0" textLength="127.9" lengthAdjust="spacingAndGlyphs">Promover el desarrollo integral en igualdad entre niñas, niños y adolescentes,</text><text x="30.1" y="50.4" font-size="3.1" font-weight="400" fill="#8a95a0" textLength="127.9" lengthAdjust="spacingAndGlyphs">erradicando todo acto violento o práctica nociva, que provoque cualquier tipo de</text><text x="30.1" y="54.8" font-size="3.1" font-weight="700" fill="#2b3a4a" textLength="127.9" lengthAdjust="spacingAndGlyphs">violación de los derechos de niñas, niños y adolescentes, atendiendo a los principios</text><text x="30.1" y="59" font-size="3.1" font-weight="400" fill="#8a95a0" textLength="26" lengthAdjust="spacingAndGlyphs">rectores de la Ley.</text><text x="41.2" y="70.6" font-size="3.6" font-weight="700" fill="#2b3a4a" textLength="36.5" lengthAdjust="spacingAndGlyphs">Objetivo específico 2</text><text x="39.6" y="75.7" font-size="3.1" font-weight="400" fill="#2b3a4a" textLength="124.6" lengthAdjust="spacingAndGlyphs">Sensibilizar al servicio público con respecto a la aplicación de los derechos humanos</text><text x="39.6" y="80.1" font-size="3.1" font-weight="400" fill="#2b3a4a" textLength="49" lengthAdjust="spacingAndGlyphs">de las niñas, niños y adolescentes.</text></g></svg></div>
<div class="a" style="left:1023px;top:617px;width:16px;height:95px;overflow:hidden;background:#fff"><svg style="left:0;top:0" width="172" height="95" viewBox="0 0 172 95"><use href="#sbg" width="172" height="95"/><g font-family="Liberation Sans, sans-serif"><rect x="5" y="22" width="167" height="52" fill="#fff" opacity=".85"/><text x="6.5" y="26.5" font-size="3.2" font-weight="400" fill="#2b3a4a">La adole</text><text x="6.5" y="30.4" font-size="3.2" font-weight="400" fill="#2b3a4a">humana</text><text x="6.5" y="34.3" font-size="3.2" font-weight="700" fill="#2b3a4a">universa</text><text x="6.5" y="38.2" font-size="3.2" font-weight="700" fill="#2b3a4a">sistema</text><text x="6.5" y="42.1" font-size="3.2" font-weight="700" fill="#2b3a4a">niñas, n</text><text x="6.5" y="46" font-size="3.2" font-weight="400" fill="#2b3a4a">(CPEUM</text><text x="6.5" y="49.9" font-size="3.2" font-weight="400" fill="#2b3a4a">DERECH</text><text x="6.5" y="53.8" font-size="3.2" font-weight="700" fill="#2b3a4a">universa</text><text x="6.5" y="57.7" font-size="3.2" font-weight="700" fill="#2b3a4a">Progres</text><text x="6.5" y="61.6" font-size="3.2" font-weight="700" fill="#2b3a4a">niñas y</text><text x="6.5" y="65.5" font-size="3.2" font-weight="400" fill="#2b3a4a">jurisdicc</text><text x="6.5" y="69.4" font-size="3.2" font-weight="400" fill="#2b3a4a">adolesc</text><text x="2" y="87" font-size="2.4" font-weight="400" fill="#9aa5b0">codhem</text></g></svg></div>
<div class="t" style="left:46.5px;top:714.5px;font-size:14px;line-height:18px;color:#c8c8c8;font-weight:400;transform:scaleX(1.0261);">1</div>
<div class="t" style="left:242.5px;top:714.5px;font-size:14px;line-height:18px;color:#c8c8c8;font-weight:400;transform:scaleX(1.0261);">2</div>
<div class="t" style="left:438.5px;top:714.5px;font-size:14px;line-height:18px;color:#d06525;font-weight:400;transform:scaleX(1.0261);">3</div>
<div class="t" style="left:634.5px;top:714.5px;font-size:14px;line-height:18px;color:#c8c8c8;font-weight:400;transform:scaleX(1.0261);">4</div>
<div class="t" style="left:830.5px;top:714.5px;font-size:14px;line-height:18px;color:#c8c8c8;font-weight:400;transform:scaleX(1.0261);">5</div>
<div class="t" style="left:1026.5px;top:714.5px;font-size:14px;line-height:18px;color:#c8c8c8;font-weight:400;transform:scaleX(1.0261);">6</div>
<div class="a" style="left:7px;top:752.5px;width:126px;height:6.5px;background:#4f4f4f;border-radius:3.500px"></div>
<svg style="left:805px;top:104px" width="236" height="131" viewBox="0 0 236 131"><defs><clipPath id="pvc"><rect width="236" height="131"/></clipPath></defs><g clip-path="url(#pvc)"><rect width="236" height="131" fill="#f2ede3"/><rect x="0" y="84" width="236" height="47" fill="#dcbc96"/><rect x="0" y="96" width="60" height="35" fill="#ecd6b8" filter="url(#b3)"/><rect x="150" y="108" width="86" height="23" fill="#e2c7a4" filter="url(#b3)"/><path d="M26 0H76V22L44 12z" fill="#b8ae9e"/><path d="M44 10L76 22V84L44 92z" fill="#2a2d3c"/><path d="M44 10L60 16V84L44 90z" fill="#23242c"/><rect x="45" y="57" width="19" height="21" fill="#c9c9c6" filter="url(#b05)"/><path d="M45 62l19-6v4l-19 6z" fill="#e8e8e6" filter="url(#b05)"/><path d="M44 78L76 72V86L30 100z" fill="#8e7458" filter="url(#b1)"/><path d="M0 0H26L44 10V92L0 101z" fill="#2b2623"/><path d="M0 0H26L44 10V14L0 3z" fill="#1c1917"/><rect x="76" y="0" width="160" height="5" fill="#cdb7dc"/><rect x="76" y="0" width="160" height="5" fill="none" stroke="#f2ede3" stroke-width="1" stroke-dasharray="1 2.500"/><rect x="118" y="86" width="32" height="6" fill="#cdb7dc"/><path d="M149 90q0-5 8-5h72q7 0 7 5v18h-87z" fill="#a29e9a" filter="url(#b05)"/><path d="M181 86v20M214 86v20" stroke="#8a8682" stroke-width="1" filter="url(#b05)"/><rect x="149" y="105" width="87" height="3.500" fill="#6e6a66" filter="url(#b05)"/><ellipse cx="214" cy="117" rx="18" ry="4" fill="#c9ab88" filter="url(#b1)"/><path d="M205 104l-6 19M222 104l6 20M213 104v24" stroke="#e8e4de" stroke-width="1.200"/><ellipse cx="214.500" cy="101" rx="19.500" ry="3.800" fill="#fbfaf8"/><path d="M210 98q2.500-6 5 0z" fill="#f2f0ec"/><ellipse cx="161" cy="114" rx="11" ry="11" fill="#a8946e" filter="url(#b05)"/><ellipse cx="158" cy="110" rx="6" ry="5" fill="#bcaa86" filter="url(#b1)"/><g transform="translate(227.500,33) scale(-0.680,0.680)"><use href="#logo" width="112" height="38"/></g><g filter="url(#b05)"><path d="M38 131c1-12 6-21 18-25l13-4c2-5 4-9 7-11h42c3 3 6 7 8 11l12 4c9 3 13 12 14 25z" fill="#8d8f95"/><path d="M38 131c1-12 6-21 18-25l6-2c-8 6-12 16-12 27z" fill="#7c7e84"/><path d="M80 98l12 12h18l10-14 3 10-9 25H92z" fill="#54575b"/><path d="M87 109h30l-2 6H90z" fill="#a4a6a8"/><path d="M71 95c7 8 15 21 17 36h8c-2-17-11-29-20-40z" fill="#3f6b9c"/><path d="M69 102c1-5 4-9 7-11c8 9 14 20 17 33l-5 7c-2-12-9-22-19-29z" fill="#85878d"/><path d="M118 91c3 3 6 7 8 11c-6 5-10 12-13 20l-6-3c2-10 6-20 11-28z" fill="#808288"/><ellipse cx="113" cy="73" rx="3" ry="8" fill="#b67f70"/><path d="M111 80c5 4 8 12 5 20l-6-3z" fill="#3c302a"/><path d="M69 62c-1-12 8-21 21-21c13 0 21 8 21 23c0 10-1 20-4 28c-3 9-10 15-18 15c-8 0-14-7-17-17c-2-8-3-18-3-28z" fill="#c79e8a"/><ellipse cx="88" cy="52" rx="14" ry="7" fill="#d6b29e" opacity=".8"/><path d="M66 68c-4-19 8-32 24-32c15 0 23 10 23 27l-2 3c-1-11-7-19-21-19c-14 0-20 8-22 20z" fill="#3a2f2a"/><path d="M75 88c3-6 9-8 17-8c9 0 15 2 18 7c0 10-4 19-12 21c-10 2-19-4-23-20z" fill="#5b4136"/><path d="M80 84c4-4 9-5 14-5c5 0 9 1 12 4c-4-1-8-1-12 1c-5-1-10-1-14 0z" fill="#3e2c24"/><ellipse cx="94" cy="88" rx="5" ry="2" fill="#8c5d54"/><path d="M86 66c-2 6-3 10 0 13c3 2 7 1 9-1" stroke="#a87c6c" stroke-width="1.200" fill="none"/><ellipse cx="79" cy="69.500" rx="3" ry="1.300" fill="#3a2c2a"/><ellipse cx="98" cy="66" rx="3.200" ry="1.300" fill="#3a2c2a"/><path d="M73 65q6-3 12-1M92 61q7-3 13 0" stroke="#3c2e28" stroke-width="1.400" fill="none"/></g><path d="M71 71l-3-2M85 69l6-2M105 63l7-1" stroke="#3a3434" stroke-width=".8" fill="none"/><rect x="71" y="65" width="14" height="9" rx="3.500" fill="none" stroke="#4a4242" stroke-width=".8" transform="rotate(-8 78 69)"/><rect x="91" y="61" width="15" height="9" rx="3.500" fill="none" stroke="#4a4242" stroke-width=".8" transform="rotate(-8 98 65)"/></g></svg>
<div class="a" style="left:1046px;top:99px;width:1px;height:669px;background:#3b3b3b"></div>
<div class="a" style="left:1047px;top:159px;width:319px;height:1px;background:#141414"></div>
<div class="t" style="left:1067.0px;top:121.5px;font-size:16px;line-height:21px;color:#fff;font-weight:700;transform:scaleX(0.9803);">Participantes</div>
<svg style="left:1323px;top:124px" width="14" height="14" viewBox="0 0 14 14" fill="none" stroke="#e0e0e0" stroke-width="1.200" stroke-linecap="round"><path d="M1.500 1.500l11 11M12.500 1.500l-11 11"/></svg>
<div class="a" style="left:1067px;top:176px;width:280px;height:32px;background:#323232;border-radius:4px"></div>
<div class="t" style="left:1079.0px;top:182.5px;font-size:14px;line-height:18px;color:#c9c9c9;font-weight:400;transform:scaleX(0.9786);">Escribe un nombre</div>
<svg style="left:1320px;top:183px" width="18" height="18" viewBox="0 0 18 18" fill="none" stroke="#fff" stroke-width="1.600" stroke-linecap="round"><circle cx="7.500" cy="7.500" r="4.800"/><path d="M11.200 11.200l4.800 4.800"/></svg>
<div class="a" style="left:1067px;top:218px;width:279px;height:32px;border:1px solid #5c5c5c;border-radius:4px;background:#232323"></div>
<svg style="left:1129px;top:225px" width="18" height="18" viewBox="0 0 18 18" fill="none" stroke="#fff" stroke-width="1.200" stroke-linecap="round" stroke-linejoin="round"><path d="M7.500 3.500H5a2.500 2.500 0 0 0-2.500 2.500v7A2.500 2.500 0 0 0 5 15.500h7a2.500 2.500 0 0 0 2.500-2.500v-1"/><path d="M10.500 2.500l5 4.300-5 4.300V8.600c-2.500 0-4 .8-5.300 2.600c.3-3.200 2-5.600 5.300-6z"/></svg>
<div class="t" style="left:1154.5px;top:225.0px;font-size:14px;line-height:18px;color:#fff;font-weight:700;transform:scaleX(0.9586);">Compartir invitación</div>
<svg style="left:1052px;top:271px" width="10" height="7" viewBox="0 0 10 7" fill="#c8c8c8"><path d="M1 1h8L5 6z"/></svg>
<div class="t" style="left:1067.0px;top:266.5px;font-size:12px;line-height:16px;color:#fff;font-weight:400;transform:scaleX(0.9703);-webkit-text-stroke:.2px #fff;">En esta reunión (49)</div>
<div class="a" style="left:1233px;top:262px;width:112px;height:24px;border:1px solid #5c5c5c;border-radius:4px;background:#232323"></div>
<div class="t" style="left:1244.0px;top:266.5px;font-size:12px;line-height:16px;color:#fff;font-weight:700;transform:scaleX(0.9424);">Silenciar a todos</div>
<div class="a" style="left:1068px;top:303px;width:32px;height:32px;background:#ffffff;border-radius:50%"></div>
<svg style="left:1076px;top:307px" width="17" height="13.500"><use href="#bird" width="17" height="13.500"/></svg>
<svg style="left:1076px;top:321px" width="17" height="10" viewBox="0 0 17 10" font-family="Liberation Sans, sans-serif" fill="#3f6078" font-weight="700"><text x="0" y="2.600" font-size="2.400" textLength="16.500" lengthAdjust="spacingAndGlyphs" font-weight="400">COMISIÓN DE</text><text x="0" y="5.600" font-size="3.300" textLength="16.500" lengthAdjust="spacingAndGlyphs">DERECHOS</text><text x="0" y="8.600" font-size="3.300" textLength="16.500" lengthAdjust="spacingAndGlyphs">HUMANOS</text></svg>
<div class="t" style="left:1108.0px;top:310.0px;font-size:14px;line-height:18px;color:#fff;font-weight:400;transform:scaleX(0.9856);-webkit-text-stroke:.25px #fff;">Alejandro Gomez Ibarra</div>
<svg style="left:1330px;top:310px" width="14" height="18" viewBox="0 0 14 18" fill="#fff"><rect x="4.200" y="1" width="5.600" height="10" rx="2.800"/><path d="M1.800 7.800v.6a5.200 5.200 0 0 0 10.400 0v-.6" fill="none" stroke="#fff" stroke-width="1.100" stroke-linecap="round"/><path d="M7 14v2.500" stroke="#fff" stroke-width="1.100" stroke-linecap="round"/></svg>
<div class="a" style="left:1068px;top:351px;width:32px;height:32px;background:#e1dcf1;border-radius:50%"></div>
<div class="t" style="left:1080.0px;top:358.5px;font-size:13px;line-height:17px;color:#4b3f85;font-weight:400;transform:scaleX(1.1058);-webkit-text-stroke:.4px #4b3f85;">2</div>
<div class="t" style="left:1108.0px;top:350.0px;font-size:14px;line-height:18px;color:#fff;font-weight:400;transform:scaleX(0.9731);-webkit-text-stroke:.25px #fff;">246924580715 (Invitado)</div>
<div class="t" style="left:1108.0px;top:370.0px;font-size:12px;line-height:16px;color:#adadad;font-weight:400;transform:scaleX(1.0109);">Invitado de la reunión</div>
<svg style="left:1328px;top:356px" width="18" height="20" viewBox="0 0 18 20" fill="none" stroke="#d8d8d8" stroke-width="1.100" stroke-linecap="round"><rect x="6.300" y="3" width="5.400" height="9" rx="2.700"/><path d="M3.700 9.500v.5a5.300 5.300 0 0 0 10.600 0v-.5M9 15.500v2.500"/><path d="M1.500 2.500l15 15.500"/></svg>
<div class="a" style="left:1068px;top:399px;width:32px;height:32px;background:#e1dcf1;border-radius:50%"></div>
<div class="t" style="left:1080.0px;top:406.5px;font-size:13px;line-height:17px;color:#4b3f85;font-weight:400;transform:scaleX(1.1058);-webkit-text-stroke:.4px #4b3f85;">2</div>
<div class="t" style="left:1108.0px;top:398.0px;font-size:14px;line-height:18px;color:#fff;font-weight:400;transform:scaleX(0.9731);-webkit-text-stroke:.25px #fff;">246924580715 (Invitado)</div>
<div class="t" style="left:1108.0px;top:418.0px;font-size:12px;line-height:16px;color:#adadad;font-weight:400;transform:scaleX(1.0109);">Invitado de la reunión</div>
<svg style="left:1328px;top:404px" width="18" height="20" viewBox="0 0 18 20" fill="none" stroke="#d8d8d8" stroke-width="1.100" stroke-linecap="round"><rect x="6.300" y="3" width="5.400" height="9" rx="2.700"/><path d="M3.700 9.500v.5a5.300 5.300 0 0 0 10.600 0v-.5M9 15.500v2.500"/><path d="M1.500 2.500l15 15.500"/></svg>
<div class="a" style="left:1068px;top:447px;width:32px;height:32px;background:#c4e9d6;border-radius:50%"></div>
<div class="t" style="left:1080.0px;top:454.5px;font-size:13px;line-height:17px;color:#1f6e46;font-weight:400;transform:scaleX(0.9225);-webkit-text-stroke:.4px #1f6e46;">A</div>
<div class="t" style="left:1108.0px;top:446.0px;font-size:14px;line-height:18px;color:#fff;font-weight:400;transform:scaleX(0.9739);-webkit-text-stroke:.25px #fff;">aaron (Invitado)</div>
<div class="t" style="left:1108.0px;top:466.0px;font-size:12px;line-height:16px;color:#adadad;font-weight:400;transform:scaleX(1.0109);">Invitado de la reunión</div>
<svg style="left:1330px;top:454px" width="14" height="18" viewBox="0 0 14 18" fill="#fff"><rect x="4.200" y="1" width="5.600" height="10" rx="2.800"/><path d="M1.800 7.800v.6a5.200 5.200 0 0 0 10.400 0v-.6" fill="none" stroke="#fff" stroke-width="1.100" stroke-linecap="round"/><path d="M7 14v2.500" stroke="#fff" stroke-width="1.100" stroke-linecap="round"/></svg>
<div class="a" style="left:1068px;top:495px;width:32px;height:32px;background:#c6d3eb;border-radius:50%"></div>
<div class="t" style="left:1074.5px;top:502.5px;font-size:13px;line-height:17px;color:#1f3c80;font-weight:400;transform:scaleX(1.0955);-webkit-text-stroke:.4px #1f3c80;">AS</div>
<div class="t" style="left:1108.0px;top:494.0px;font-size:14px;line-height:18px;color:#fff;font-weight:400;transform:scaleX(0.9672);-webkit-text-stroke:.25px #fff;">Adriana Silva (Invitado)</div>
<div class="t" style="left:1108.0px;top:514.0px;font-size:12px;line-height:16px;color:#adadad;font-weight:400;transform:scaleX(1.0109);">Invitado de la reunión</div>
<svg style="left:1328px;top:500px" width="18" height="20" viewBox="0 0 18 20" fill="none" stroke="#d8d8d8" stroke-width="1.100" stroke-linecap="round"><rect x="6.300" y="3" width="5.400" height="9" rx="2.700"/><path d="M3.700 9.500v.5a5.300 5.300 0 0 0 10.600 0v-.5M9 15.500v2.500"/><path d="M1.500 2.500l15 15.500"/></svg>
<div class="a" style="left:1068px;top:543px;width:32px;height:32px;background:#f9e6b7;border-radius:50%"></div>
<div class="t" style="left:1074.5px;top:550.5px;font-size:13px;line-height:17px;color:#8a6a12;font-weight:400;transform:scaleX(1.0108);-webkit-text-stroke:.4px #8a6a12;">AO</div>
<div class="t" style="left:1108.0px;top:542.0px;font-size:14px;line-height:18px;color:#fff;font-weight:400;transform:scaleX(0.9898);-webkit-text-stroke:.25px #fff;">Aleida Badillo Or...</div>
<div class="t" style="left:1225.0px;top:542.0px;font-size:14px;line-height:18px;color:#fff;font-weight:400;transform:scaleX(1.0024);-webkit-text-stroke:.25px #fff;">(Invitado)</div>
<div class="t" style="left:1108.0px;top:562.0px;font-size:12px;line-height:16px;color:#adadad;font-weight:400;transform:scaleX(1.0109);">Invitado de la reunión</div>
<div class="t" style="left:1294.0px;top:552.0px;font-size:12px;line-height:16px;color:#fff;font-weight:400;transform:scaleX(0.9414);-webkit-text-stroke:.2px #fff;">En espera</div>
<div class="a" style="left:1068px;top:591px;width:32px;height:32px;background:#f4e3c4;border-radius:50%"></div>
<div class="t" style="left:1074.5px;top:598.5px;font-size:13px;line-height:17px;color:#7c5c14;font-weight:400;transform:scaleX(0.9744);-webkit-text-stroke:.4px #7c5c14;">AM</div>
<div class="t" style="left:1108.0px;top:590.0px;font-size:14px;line-height:18px;color:#fff;font-weight:400;transform:scaleX(1.0049);-webkit-text-stroke:.25px #fff;">Antonio Hernán...</div>
<div class="t" style="left:1225.0px;top:590.0px;font-size:14px;line-height:18px;color:#fff;font-weight:400;transform:scaleX(1.0024);-webkit-text-stroke:.25px #fff;">(Invitado)</div>
<div class="t" style="left:1108.0px;top:610.0px;font-size:12px;line-height:16px;color:#adadad;font-weight:400;transform:scaleX(1.0109);">Invitado de la reunión</div>
<svg style="left:1328px;top:596px" width="18" height="20" viewBox="0 0 18 20" fill="none" stroke="#d8d8d8" stroke-width="1.100" stroke-linecap="round"><rect x="6.300" y="3" width="5.400" height="9" rx="2.700"/><path d="M3.700 9.500v.5a5.300 5.300 0 0 0 10.600 0v-.5M9 15.500v2.500"/><path d="M1.500 2.500l15 15.500"/></svg>
<div class="a" style="left:1068px;top:639px;width:32px;height:32px;background:#f2cfc9;border-radius:50%"></div>
<div class="t" style="left:1074.5px;top:646.5px;font-size:13px;line-height:17px;color:#8c2c22;font-weight:400;transform:scaleX(1.0108);-webkit-text-stroke:.4px #8c2c22;">AG</div>
<div class="t" style="left:1108.0px;top:638.0px;font-size:14px;line-height:18px;color:#fff;font-weight:400;transform:scaleX(0.9830);-webkit-text-stroke:.25px #fff;">Armando Balbue...</div>
<div class="t" style="left:1225.0px;top:638.0px;font-size:14px;line-height:18px;color:#fff;font-weight:400;transform:scaleX(1.0024);-webkit-text-stroke:.25px #fff;">(Invitado)</div>
<div class="t" style="left:1108.0px;top:658.0px;font-size:12px;line-height:16px;color:#adadad;font-weight:400;transform:scaleX(1.0109);">Invitado de la reunión</div>
<svg style="left:1328px;top:644px" width="18" height="20" viewBox="0 0 18 20" fill="none" stroke="#d8d8d8" stroke-width="1.100" stroke-linecap="round"><rect x="6.300" y="3" width="5.400" height="9" rx="2.700"/><path d="M3.700 9.500v.5a5.300 5.300 0 0 0 10.600 0v-.5M9 15.500v2.500"/><path d="M1.500 2.500l15 15.500"/></svg>
<div class="a" style="left:1068px;top:687px;width:32px;height:32px;background:#d6d4ef;border-radius:50%"></div>
<div class="t" style="left:1074.5px;top:694.5px;font-size:13px;line-height:17px;color:#303080;font-weight:400;transform:scaleX(1.0955);-webkit-text-stroke:.4px #303080;">AS</div>
<div class="t" style="left:1108.0px;top:686.0px;font-size:14px;line-height:18px;color:#fff;font-weight:400;transform:scaleX(0.9914);-webkit-text-stroke:.25px #fff;">Armando Gallar...</div>
<div class="t" style="left:1225.0px;top:686.0px;font-size:14px;line-height:18px;color:#fff;font-weight:400;transform:scaleX(1.0024);-webkit-text-stroke:.25px #fff;">(Invitado)</div>
<div class="t" style="left:1108.0px;top:706.0px;font-size:12px;line-height:16px;color:#adadad;font-weight:400;transform:scaleX(1.0109);">Invitado de la reunión</div>
<svg style="left:1328px;top:692px" width="18" height="20" viewBox="0 0 18 20" fill="none" stroke="#d8d8d8" stroke-width="1.100" stroke-linecap="round"><rect x="6.300" y="3" width="5.400" height="9" rx="2.700"/><path d="M3.700 9.500v.5a5.300 5.300 0 0 0 10.600 0v-.5M9 15.500v2.500"/><path d="M1.500 2.500l15 15.500"/></svg>
<div class="a" style="left:1068px;top:735px;width:32px;height:32px;background:#f9e6b2;border-radius:50%"></div>
<div class="t" style="left:1074.5px;top:742.5px;font-size:13px;line-height:17px;color:#8a6a12;font-weight:400;transform:scaleX(1.1429);-webkit-text-stroke:.4px #8a6a12;">AF</div>
<div class="t" style="left:1108.0px;top:734.0px;font-size:14px;line-height:18px;color:#fff;font-weight:400;transform:scaleX(0.9767);-webkit-text-stroke:.25px #fff;">Arturo González ...</div>
<div class="t" style="left:1225.0px;top:734.0px;font-size:14px;line-height:18px;color:#fff;font-weight:400;transform:scaleX(1.0024);-webkit-text-stroke:.25px #fff;">(Invitado)</div>
<div class="t" style="left:1108.0px;top:754.0px;font-size:12px;line-height:16px;color:#adadad;font-weight:400;transform:scaleX(1.0109);">Invitado de la reunión</div>
<svg style="left:1328px;top:740px" width="18" height="20" viewBox="0 0 18 20" fill="none" stroke="#d8d8d8" stroke-width="1.100" stroke-linecap="round"><rect x="6.300" y="3" width="5.400" height="9" rx="2.700"/><path d="M3.700 9.500v.5a5.300 5.300 0 0 0 10.600 0v-.5M9 15.500v2.500"/><path d="M1.500 2.500l15 15.500"/></svg>
<div class="a" style="left:0px;top:766px;width:1366px;height:2px;background:#0c2a1b"></div>
<div class="a" style="left:48px;top:766px;width:288px;height:2px;background:#f2f2f2"></div>
<div class="a" style="left:535px;top:766px;width:47px;height:2px;background:#1b7245"></div>
</body></html>
